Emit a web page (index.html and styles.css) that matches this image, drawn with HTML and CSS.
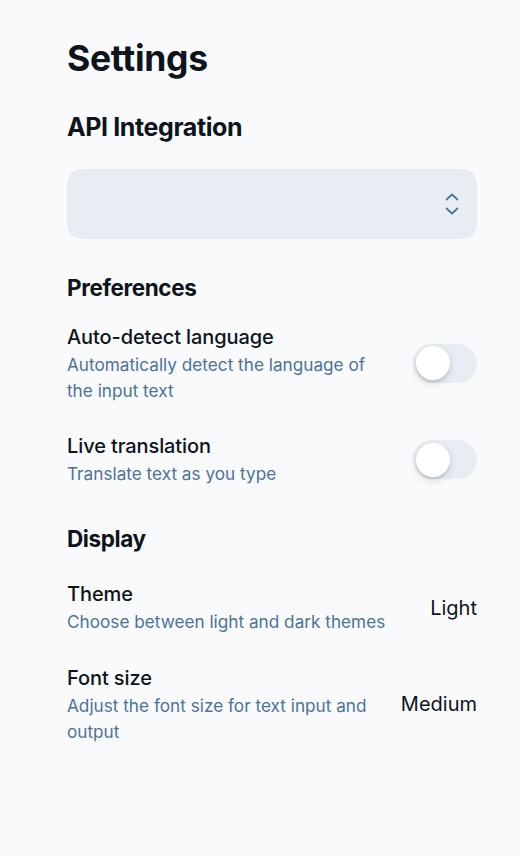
FILE: index.html
```html
<!DOCTYPE html>
<html>
<head>
<meta charset="utf-8">
<link rel="stylesheet" href="styles.css">
</head>
<body>
<main class="page">
  <h1 class="title">Settings</h1>
  <h2 class="section lg">API Integration</h2>
  <div class="select-wrap">
    <div class="select">
      <svg class="chev" width="16" height="28" viewBox="0 0 16 28" fill="none" stroke="#4e7397" stroke-width="1.8" stroke-linecap="round" stroke-linejoin="round">
        <path d="M2.5 9.5 L8 4.5 L13.5 9.5"/>
        <path d="M2.5 18.5 L8 23.5 L13.5 18.5"/>
      </svg>
    </div>
  </div>
  <h2 class="section">Preferences</h2>
  <div class="row">
    <div class="text">
      <div class="label">Auto-detect language</div>
      <div class="desc">Automatically detect the language of the input text</div>
    </div>
    <div class="toggle"><span class="knob"></span></div>
  </div>
  <div class="row">
    <div class="text">
      <div class="label">Live translation</div>
      <div class="desc">Translate text as you type</div>
    </div>
    <div class="toggle"><span class="knob"></span></div>
  </div>
  <h2 class="section">Display</h2>
  <div class="row">
    <div class="text">
      <div class="label">Theme</div>
      <div class="desc">Choose between light and dark themes</div>
    </div>
    <div class="value">Light</div>
  </div>
  <div class="row">
    <div class="text">
      <div class="label">Font size</div>
      <div class="desc">Adjust the font size for text input and output</div>
    </div>
    <div class="value">Medium</div>
  </div>
</main>
</body>
</html>
```
FILE: styles.css
```css
* { box-sizing: border-box; }
html, body { margin: 0; padding: 0; }
body {
  background: #f8fafc;
  font-family: "Inter", "Noto Sans", sans-serif;
  color: #0e141b;
}
.page {
  width: 520px;
  padding: 37px 43px 40px 67px;
}
.title {
  margin: 0;
  font-size: 35.5px;
  font-weight: 700;
  line-height: 44px;
  letter-spacing: -0.3px;
}
.section {
  margin: 0;
  font-size: 22.5px;
  font-weight: 700;
  line-height: 28px;
  letter-spacing: -0.4px;
  padding: 20px 0 10px;
}
.section.lg {
  font-size: 25px;
  line-height: 32px;
  padding: 30px 0 11px;
}
.select-wrap { padding: 15px 0; }
.select {
  height: 70px;
  border-radius: 15px;
  background: #e7edf3;
  display: flex;
  align-items: center;
  justify-content: flex-end;
  padding-right: 17px;
}
.row {
  display: flex;
  align-items: center;
  justify-content: space-between;
  gap: 20px;
  padding: 10px 0;
  min-height: 90px;
}
.text { flex: 1; min-width: 0; }
.label {
  font-size: 20px;
  font-weight: 500;
  line-height: 30px;
  letter-spacing: -0.1px;
}
.desc {
  font-size: 17.2px;
  line-height: 26.25px;
  color: #4e7397;
}
.toggle {
  width: 64px;
  height: 39px;
  border-radius: 20px;
  background: #e7edf3;
  padding: 2.5px;
  display: flex;
  flex-shrink: 0;
}
.knob {
  width: 34px;
  height: 34px;
  border-radius: 50%;
  background: #fff;
  box-shadow: 0 3px 8px rgba(0,0,0,0.15), 0 3px 1px rgba(0,0,0,0.06);
}
.value {
  font-size: 20px;
  line-height: 30px;
  flex-shrink: 0;
}
```
